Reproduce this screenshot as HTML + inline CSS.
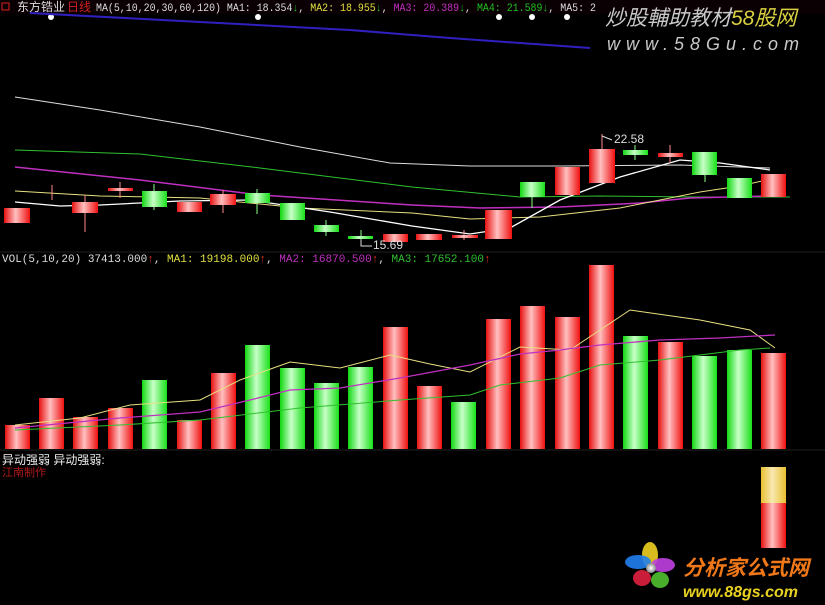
<!DOCTYPE html>
<html><head><meta charset="utf-8"><style>
html,body{margin:0;padding:0;background:#000;overflow:hidden}
svg{display:block}
</style></head><body>
<svg width="825" height="605" viewBox="0 0 825 605" xmlns="http://www.w3.org/2000/svg" font-family="Liberation Mono,Noto Sans CJK SC,monospace" font-size="11">
<defs>
<linearGradient id="r" x1="0" x2="1" y1="0" y2="0"><stop offset="0" stop-color="#e81010"/><stop offset="0.45" stop-color="#ffc0c0"/><stop offset="1" stop-color="#f01010"/></linearGradient>
<linearGradient id="g" x1="0" x2="1" y1="0" y2="0"><stop offset="0" stop-color="#10d810"/><stop offset="0.45" stop-color="#c8ffc8"/><stop offset="1" stop-color="#18e018"/></linearGradient>
<linearGradient id="yb" x1="0" x2="1" y1="0" y2="0"><stop offset="0" stop-color="#e8c030"/><stop offset="0.45" stop-color="#f8e8b0"/><stop offset="1" stop-color="#e8c030"/></linearGradient>
<radialGradient id="fl"><stop offset="0" stop-color="#fff"/><stop offset="1" stop-color="#888"/></radialGradient>
</defs>
<rect width="825" height="605" fill="#000"/>
<rect x="0" y="0" width="825" height="14" fill="#0a0004"/>
<rect x="2" y="3" width="7" height="7" fill="none" stroke="#e02020"/>
<text x="17" y="11" fill="#ddd" font-family="Liberation Sans,Noto Sans CJK SC,sans-serif" font-size="12">东方锆业</text>
<text x="67" y="11" fill="#d02020" font-family="Liberation Sans,Noto Sans CJK SC,sans-serif" font-size="12">日线</text>
<text x="96" y="11" fill="#ddd" font-size="11" textLength="500" lengthAdjust="spacingAndGlyphs">MA(5,10,20,30,60,120) MA1: 18.354<tspan fill="#20c020">↓</tspan>, <tspan fill="#e0e040">MA2: 18.955</tspan><tspan fill="#20c020">↓</tspan>, <tspan fill="#c030c0">MA3: 20.389</tspan><tspan fill="#20c020">↓</tspan>, <tspan fill="#20c020">MA4: 21.589↓</tspan>, MA5: 2</text>
<g fill="#fff"><circle cx="51" cy="17" r="3"/><circle cx="258" cy="17" r="3"/><circle cx="499" cy="17" r="3"/><circle cx="532" cy="17" r="3"/><circle cx="567" cy="17" r="3"/></g>
<polyline points="30,13 200,22 350,30 450,38 590,48" fill="none" stroke="#3020c0" stroke-width="2"/>
<text x="605" y="25" fill="#c8c8c8" font-family="Liberation Sans,Noto Sans CJK SC,sans-serif" font-size="21" font-style="italic">炒股輔助教材<tspan fill="#d8d040">58股网</tspan></text>
<text x="607" y="50" fill="#c8c8c8" font-family="Liberation Sans,sans-serif" font-size="18" font-style="italic" letter-spacing="6">www.58Gu.com</text>
<line x1="0" y1="252" x2="825" y2="252" stroke="#202020"/>
<polyline points="15,97 100,110 200,127 300,147 390,163 470,166 560,166 680,165 770,168" fill="none" stroke="#ddd"/>
<polyline points="15,150 140,154 260,168 412,187 520,197 600,196 700,197 790,197" fill="none" stroke="#30c030"/>
<polyline points="15,167 140,180 260,195 412,205 480,208 560,207 640,203 690,198 770,196" fill="none" stroke="#c030c0" stroke-width="1.5"/>
<polyline points="15,191 100,196 200,198 300,208 412,213 470,219 540,217 620,208 700,192 740,186 775,178" fill="none" stroke="#e8e080"/>
<polyline points="15,202 60,206 100,205 180,201 250,200 330,212 412,226 470,234 510,228 560,200 620,177 680,160 720,163 770,170" fill="none" stroke="#fff" stroke-width="1.3"/>
<g>
<rect x="4" y="208" width="26" height="15" fill="url(#r)"/>
<line x1="52" y1="185" x2="52" y2="200" stroke="#f88"/>
<line x1="85" y1="195" x2="85" y2="232" stroke="#f88"/><rect x="72" y="202" width="26" height="11" fill="url(#r)"/>
<line x1="120" y1="182" x2="120" y2="198" stroke="#f88"/><rect x="108" y="188" width="25" height="3" fill="url(#r)"/>
<line x1="154" y1="184" x2="154" y2="210" stroke="#8f8"/><rect x="142" y="191" width="25" height="16" fill="url(#g)"/>
<rect x="177" y="202" width="25" height="10" fill="url(#r)"/>
<line x1="223" y1="190" x2="223" y2="213" stroke="#f88"/><rect x="210" y="194" width="26" height="11" fill="url(#r)"/>
<line x1="257" y1="189" x2="257" y2="214" stroke="#8f8"/><rect x="245" y="193" width="25" height="10" fill="url(#g)"/>
<rect x="280" y="203" width="25" height="17" fill="url(#g)"/>
<line x1="326" y1="220" x2="326" y2="236" stroke="#8f8"/><rect x="314" y="225" width="25" height="7" fill="url(#g)"/>
<line x1="361" y1="230" x2="361" y2="246" stroke="#8f8"/><rect x="348" y="236" width="25" height="3" fill="url(#g)"/>
<rect x="383" y="234" width="25" height="8" fill="url(#r)"/>
<rect x="416" y="234" width="26" height="6" fill="url(#r)"/>
<line x1="464" y1="230" x2="464" y2="240" stroke="#f88"/><rect x="452" y="235" width="26" height="3" fill="url(#r)"/>
<rect x="485" y="210" width="27" height="29" fill="url(#r)"/>
<line x1="532" y1="197" x2="532" y2="208" stroke="#8f8"/><rect x="520" y="182" width="25" height="15" fill="url(#g)"/>
<rect x="555" y="167" width="25" height="28" fill="url(#r)"/>
<line x1="602" y1="134" x2="602" y2="149" stroke="#f88"/><rect x="589" y="149" width="26" height="34" fill="url(#r)"/>
<line x1="635" y1="145" x2="635" y2="160" stroke="#8f8"/><rect x="623" y="150" width="25" height="5" fill="url(#g)"/>
<line x1="670" y1="145" x2="670" y2="163" stroke="#f88"/><rect x="658" y="153" width="25" height="4" fill="url(#r)"/>
<line x1="705" y1="175" x2="705" y2="182" stroke="#8f8"/><rect x="692" y="152" width="25" height="23" fill="url(#g)"/>
<rect x="727" y="178" width="25" height="20" fill="url(#g)"/>
<rect x="761" y="174" width="25" height="23" fill="url(#r)"/>
</g>
<polyline points="602,136 612,140" fill="none" stroke="#ddd"/>
<text x="614" y="143" fill="#ddd" font-family="Liberation Sans,sans-serif" font-size="12">22.58</text>
<polyline points="361,240 361,246 372,246" fill="none" stroke="#ddd"/>
<text x="373" y="249" fill="#ddd" font-family="Liberation Sans,sans-serif" font-size="12">15.69</text>
<text x="2" y="262" fill="#ddd" font-size="11">VOL(5,10,20) 37413.000<tspan fill="#e03020">↑</tspan>, <tspan fill="#e0e040">MA1: 19198.000</tspan><tspan fill="#e03020">↑</tspan>, <tspan fill="#c030c0">MA2: 16870.500</tspan><tspan fill="#e03020">↑</tspan>, <tspan fill="#30c030">MA3: 17652.100</tspan><tspan fill="#e03020">↑</tspan></text>
<g>
<rect x="5" y="425" width="25" height="24" fill="url(#r)"/>
<rect x="39" y="398" width="25" height="51" fill="url(#r)"/>
<rect x="73" y="417" width="25" height="32" fill="url(#r)"/>
<rect x="108" y="408" width="25" height="41" fill="url(#r)"/>
<rect x="142" y="380" width="25" height="69" fill="url(#g)"/>
<rect x="177" y="420" width="25" height="29" fill="url(#r)"/>
<rect x="211" y="373" width="25" height="76" fill="url(#r)"/>
<rect x="245" y="345" width="25" height="104" fill="url(#g)"/>
<rect x="280" y="368" width="25" height="81" fill="url(#g)"/>
<rect x="314" y="383" width="25" height="66" fill="url(#g)"/>
<rect x="348" y="367" width="25" height="82" fill="url(#g)"/>
<rect x="383" y="327" width="25" height="122" fill="url(#r)"/>
<rect x="417" y="386" width="25" height="63" fill="url(#r)"/>
<rect x="451" y="402" width="25" height="47" fill="url(#g)"/>
<rect x="486" y="319" width="25" height="130" fill="url(#r)"/>
<rect x="520" y="306" width="25" height="143" fill="url(#r)"/>
<rect x="555" y="317" width="25" height="132" fill="url(#r)"/>
<rect x="589" y="265" width="25" height="184" fill="url(#r)"/>
<rect x="623" y="336" width="25" height="113" fill="url(#g)"/>
<rect x="658" y="342" width="25" height="107" fill="url(#r)"/>
<rect x="692" y="356" width="25" height="93" fill="url(#g)"/>
<rect x="727" y="350" width="25" height="99" fill="url(#g)"/>
<rect x="761" y="353" width="25" height="96" fill="url(#r)"/>
</g>
<polyline points="15,425 80,418 130,405 200,400 240,380 290,362 340,368 390,355 430,364 470,372 520,347 570,350 600,330 630,310 700,320 750,330 775,348" fill="none" stroke="#e8e080"/>
<polyline points="15,428 120,418 200,412 250,400 290,390 340,388 400,378 470,365 520,354 560,350 600,345 660,340 720,338 775,335" fill="none" stroke="#c030c0" stroke-width="1.3"/>
<polyline points="15,430 120,425 200,420 300,408 400,400 470,395 500,385 560,378 600,365 660,360 700,355 740,350 770,348" fill="none" stroke="#30c030"/>
<line x1="0" y1="450" x2="825" y2="450" stroke="#202020"/>
<text x="2" y="464" fill="#eee" font-family="Liberation Sans,Noto Sans CJK SC,sans-serif" font-size="12">异动强弱  异动强弱:</text>
<text x="2" y="476" fill="#b01818" font-family="Liberation Sans,Noto Sans CJK SC,sans-serif" font-size="11">江南制作</text>
<rect x="761" y="467" width="25" height="36" fill="url(#yb)"/>
<rect x="761" y="503" width="25" height="45" fill="url(#r)"/>
<g>
<ellipse cx="650" cy="555" rx="8" ry="13" fill="#f0d020" opacity=".9"/>
<ellipse cx="638" cy="562" rx="13" ry="7" fill="#2080f0" opacity=".9"/>
<ellipse cx="663" cy="565" rx="12" ry="7" fill="#c040e0" opacity=".9"/>
<ellipse cx="642" cy="578" rx="9" ry="8" fill="#e02040" opacity=".9"/>
<ellipse cx="660" cy="580" rx="9" ry="8" fill="#50c030" opacity=".9"/>
<circle cx="651" cy="568" r="5" fill="url(#fl)"/>
</g>
<text x="683" y="575" fill="#f07818" font-family="Liberation Sans,Noto Sans CJK SC,sans-serif" font-size="21" font-weight="bold" font-style="italic">分析家公式网</text>
<text x="683" y="597" fill="#e8d020" font-family="Liberation Sans,sans-serif" font-size="16" font-weight="bold" font-style="italic">www.88gs.com</text>
</svg>
</body></html>
